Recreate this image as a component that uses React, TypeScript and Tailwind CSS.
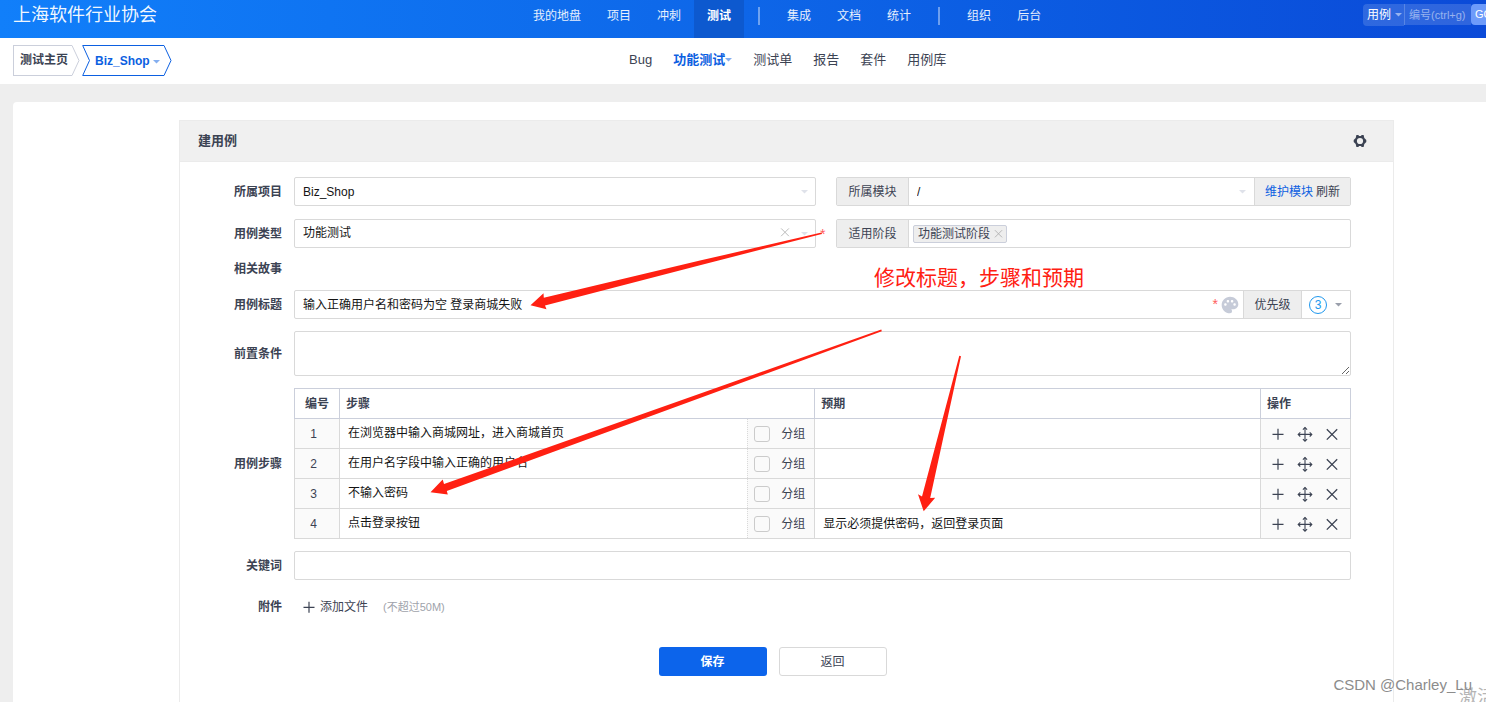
import React from "react";
import { MdPalette } from "react-icons/md";

const topGroups: string[][] = [
  ["我的地盘", "项目", "冲刺", "测试"],
  ["集成", "文档", "统计"],
  ["组织", "后台"],
];

const subItems = ["Bug", "功能测试", "测试单", "报告", "套件", "用例库"];

const steps = [
  { step: "在浏览器中输入商城网址，进入商城首页", expect: "" },
  { step: "在用户名字段中输入正确的用户名", expect: "" },
  { step: "不输入密码", expect: "" },
  { step: "点击登录按钮", expect: "显示必须提供密码，返回登录页面" },
];

function Caret({ className = "" }: { className?: string }) {
  return (
    <svg className={`pointer-events-none shrink-0 ${className}`} width="7" height="4" viewBox="0 0 7 4" fill="currentColor" aria-hidden="true">
      <path d="M0 0H7L3.5 3.6Z" />
    </svg>
  );
}

function PlusIcon() {
  return (
    <svg width="16" height="16" viewBox="0 0 16 16" fill="none" stroke="currentColor" strokeWidth="1.2" aria-hidden="true">
      <path d="M8 2.8V13.8M2.5 8.4H13.5" />
    </svg>
  );
}

function MoveIcon() {
  return (
    <svg width="16" height="16" viewBox="0 0 16 16" fill="none" stroke="currentColor" strokeWidth="1.1" aria-hidden="true">
      <path d="M8 1.5V15.1M1.5 8.4H14.5" />
      <path d="M5.9 3.6L8 1.5L10.1 3.6M5.9 13.1L8 15.2L10.1 13.1M3.3 6.3L1.2 8.4L3.3 10.5M12.7 6.3L14.8 8.4L12.7 10.5" />
    </svg>
  );
}

function CrossIcon({ size = 16 }: { size?: number }) {
  return (
    <svg width={size} height={size} viewBox="0 0 16 16" fill="none" stroke="currentColor" strokeWidth="1.3" aria-hidden="true">
      <path d="M2.8 3.2L13.2 13.6M13.2 3.2L2.8 13.6" />
    </svg>
  );
}

function GearIcon() {
  return (
    <svg width="14" height="14" viewBox="0 0 14 14" fill="currentColor" aria-hidden="true">
      <path
        fillRule="evenodd"
        d="M3.4 1L5.3 1.1L6.1 2H7.9L8.7 1.1L10.6 1L11.3 3.9L13.3 6V8L11.3 10.1L10.6 13L8.7 12.9L7.9 12H6.1L5.3 12.9L3.4 13L2.7 10.1L0.7 8V6L2.7 3.9ZM7 3.9A3.1 3.1 0 1 0 7 10.1A3.1 3.1 0 1 0 7 3.9Z"
      />
    </svg>
  );
}

function TopBar() {
  return (
    <header className="flex h-[38px] items-start bg-gradient-to-r from-[#117ffa] via-[#0e66e8] to-[#0b4ad8] text-white">
      <h1 className="w-[520px] shrink-0 pl-[13px] text-[18px] leading-[30px] text-white/95">上海软件行业协会</h1>
      <nav className="flex shrink-0">
        {topGroups.map((group, g) => (
          <React.Fragment key={g}>
            {g > 0 && (
              <span className="flex h-8 w-[30px] items-center justify-center">
                <span className="h-[18px] w-[2px] bg-white/40" />
              </span>
            )}
            {group.map((item) => (
              <a
                key={item}
                href="#"
                className={
                  item === "测试"
                    ? "h-[38px] bg-[#0d59cf] px-[13px] leading-8 font-bold"
                    : "h-[38px] px-[13px] leading-8 text-white/90"
                }
              >
                {item}
              </a>
            ))}
          </React.Fragment>
        ))}
      </nav>
      <form className="ml-auto flex overflow-hidden pt-1" onSubmit={(e) => e.preventDefault()}>
        <button type="button" className="flex h-[22px] w-[41px] items-center gap-1 rounded-l-sm bg-white/15 pl-1">
          用例
          <Caret className="text-white/50" />
        </button>
        <input
          aria-label="编号"
          placeholder="编号(ctrl+g)"
          className="h-[21px] w-[67px] border-l border-white/20 bg-white/15 pl-1 text-[11px] outline-none placeholder:text-white/50"
        />
        <span className="w-[15px] overflow-hidden">
          <button type="submit" className="h-[21px] w-8 rounded-l-sm bg-[#6e9bfa] pl-1 text-left text-[11px] font-medium">
            GO
          </button>
        </span>
      </form>
    </header>
  );
}

function SubBar() {
  return (
    <div className="flex h-[46px] items-start bg-white">
      <div className="flex w-[629px] shrink-0 pt-[7px] pl-[13px] font-bold">
        <a href="#" className="flex">
          <span className="h-[31px] border-y border-l border-[#cbcfdb] pr-1 pl-[6px] leading-7">测试主页</span>
          <svg width="8" height="31" viewBox="0 0 8 31" fill="none" stroke="#cbcfdb" aria-hidden="true">
            <path d="M0 0.5L7 15.5L0 30.5" />
          </svg>
        </a>
        <a href="#" className="ml-[2px] flex text-[#0c60e1]">
          <svg width="8" height="31" viewBox="0 0 8 31" fill="none" stroke="#0c60e1" aria-hidden="true">
            <path d="M8 0.5H0.7L7.5 15.5L0.7 30.5H8" />
          </svg>
          <span className="flex h-[31px] items-center gap-[3px] border-y border-[#0c60e1] pr-1 pl-[5px] leading-7">
            Biz_Shop
            <Caret className="mt-[3px] text-[#0c60e1]/50" />
          </span>
          <svg width="8" height="31" viewBox="0 0 8 31" fill="none" stroke="#0c60e1" aria-hidden="true">
            <path d="M0 0.5L7 15.5L0 30.5" />
          </svg>
        </a>
      </div>
      <nav className="flex gap-[21px] text-[13px] leading-[43px]">
        {subItems.map((item) =>
          item === "功能测试" ? (
            <a key={item} href="#" className="flex items-center font-bold text-[#0c60e1]">
              {item}
              <Caret className="text-[#0c60e1]/50" />
            </a>
          ) : (
            <a key={item} href="#">
              {item}
            </a>
          ),
        )}
      </nav>
    </div>
  );
}

function Row({ label, htmlFor, children, className = "" }: { label: string; htmlFor?: string; children?: React.ReactNode; className?: string }) {
  return (
    <div className={`flex items-center ${className}`}>
      <label htmlFor={htmlFor} className="mr-3 w-[102px] shrink-0 text-right leading-5 font-bold">
        {label}
      </label>
      <div className="min-w-0 flex-1">{children}</div>
    </div>
  );
}

function StepsTable() {
  return (
    <table className="w-full table-fixed border-collapse border border-[#cbcfdb]">
      <colgroup>
        <col className="w-[45px]" />
        <col className="w-[45%]" />
        <col />
        <col className="w-[90px]" />
      </colgroup>
      <thead>
        <tr className="h-[30px] text-left">
          <th className="border border-[#cbcfdb] text-center">编号</th>
          <th className="border border-[#cbcfdb] pl-[6px]">步骤</th>
          <th className="border border-[#cbcfdb] pl-[6px]">预期</th>
          <th className="border border-[#cbcfdb] pl-[6px]">操作</th>
        </tr>
      </thead>
      <tbody>
        {steps.map((row, i) => (
          <tr key={i} className="h-[30px]">
            <td className="border border-[#d9d9d9] bg-[#fafafa] p-0 pr-[7px] text-center">{i + 1}</td>
            <td className="border border-[#d9d9d9] p-0">
              <div className="flex h-[29px]">
                <input aria-label={`步骤 ${i + 1}`} defaultValue={row.step} className="min-w-0 flex-1 pb-[2px] pl-2 text-[#141414] outline-none" />
                <label className="flex w-[67px] items-center border-l border-dotted border-[#d9d9d9] bg-[#fafafa] pl-[6px]">
                  <input type="checkbox" className="mr-[11px] size-4 appearance-none rounded-[3px] border border-[#cbcbcb] checked:bg-[#0c64eb]" />
                  分组
                </label>
              </div>
            </td>
            <td className="border border-[#d9d9d9] p-0">
              <input aria-label={`预期 ${i + 1}`} defaultValue={row.expect} className="block h-[29px] w-full pb-[2px] pl-2 text-[#141414] outline-none" />
            </td>
            <td className="border border-[#d9d9d9] bg-[#fafafa] p-0">
              <div className="flex gap-[11px] pl-[9px]">
                <button type="button" aria-label="添加"><PlusIcon /></button>
                <button type="button" aria-label="移动"><MoveIcon /></button>
                <button type="button" aria-label="删除"><CrossIcon /></button>
              </div>
            </td>
          </tr>
        ))}
      </tbody>
    </table>
  );
}

function CaseForm() {
  return (
    <form className="pt-[15px] pr-[42px]" onSubmit={(e) => e.preventDefault()}>
      <Row label="所属项目" htmlFor="project">
        <div className="grid grid-cols-[522fr_515fr] gap-5">
          <div className="relative">
            <select id="project" className="h-[29px] w-full appearance-none rounded-[2px] border border-[#d9d9d9] bg-white pl-2 text-[#141414]">
              <option>Biz_Shop</option>
            </select>
            <Caret className="absolute top-[13px] right-2 text-[#dfe2ea]" />
          </div>
          <div className="flex h-[29px] rounded-[2px] border border-[#d9d9d9]">
            <label htmlFor="module" className="flex w-[72px] items-center justify-center border-r border-[#d9d9d9] bg-[#eeeeee]">
              所属模块
            </label>
            <div className="relative flex-1">
              <select id="module" className="h-full w-full appearance-none bg-white pl-2 text-[#141414]">
                <option>/</option>
              </select>
              <Caret className="absolute top-3 right-2 text-[#dfe2ea]" />
            </div>
            <div className="flex w-[96px] items-center justify-center gap-[3px] border-l border-[#d9d9d9] bg-[#eeeeee]">
              <a href="#" className="text-[#0c60e1]">维护模块</a>
              <a href="#">刷新</a>
            </div>
          </div>
        </div>
      </Row>

      <Row label="用例类型" htmlFor="type" className="mt-[13px]">
        <div className="grid grid-cols-[522fr_515fr] gap-5">
          <div className="relative">
            <select id="type" className="h-[29px] w-full appearance-none rounded-[2px] border border-[#d9d9d9] bg-white pb-[2px] pl-2 text-[#141414]">
              <option>功能测试</option>
            </select>
            <button type="button" aria-label="清除" className="absolute top-[7px] right-[25px] text-[#b9b9b9]">
              <CrossIcon size={12} />
            </button>
            <Caret className="absolute top-[13px] right-2 text-[#dfe2ea]" />
            <span className="absolute top-[5px] left-full ml-1 text-[14px] leading-5 text-[#ff5d5d]">*</span>
          </div>
          <div className="flex h-[29px] rounded-[2px] border border-[#d9d9d9]">
            <span className="flex w-[72px] items-center justify-center border-r border-[#d9d9d9] bg-[#eeeeee]">适用阶段</span>
            <div className="flex items-center pl-1">
              <span className="flex h-[18px] items-center rounded-[2px] border border-[#cbcfdb] bg-[#eeeeee] pr-[2px] pl-1">
                功能测试阶段
                <button type="button" aria-label="移除" className="ml-[3px] text-[#b0b0b0]">
                  <CrossIcon size={11} />
                </button>
              </span>
            </div>
          </div>
        </div>
      </Row>

      <Row label="相关故事" className="mt-[11px]" />

      <Row label="用例标题" htmlFor="title" className="mt-[11px]">
        <div className="flex h-[29px] rounded-l-[2px] border border-[#d9d9d9]">
          <input
            id="title"
            defaultValue="输入正确用户名和密码为空 登录商城失败"
            className="min-w-0 flex-1 pl-2 text-[#141414] outline-none"
          />
          <span className="pt-[1px] text-[14px] leading-6 text-[#ff5d5d]">*</span>
          <button type="button" aria-label="颜色" className="mr-[3px] ml-[2px] text-[#c6cbd8]">
            <MdPalette size={20} />
          </button>
          <label htmlFor="priority" className="flex w-[59px] items-center justify-center border-x border-[#d9d9d9] bg-[#eeeeee]">
            优先级
          </label>
          <button id="priority" type="button" className="flex w-[48px] items-center gap-2 pl-[7px]">
            <span className="flex size-[18px] items-center justify-center rounded-full border border-[#2098ee] text-[#2098ee]">3</span>
            <Caret className="text-[#9a9fab]" />
          </button>
        </div>
      </Row>

      <Row label="前置条件" htmlFor="precondition" className="mt-[12px]">
        <textarea id="precondition" className="block h-[45px] w-full rounded-[2px] border border-[#d9d9d9] outline-none" />
      </Row>

      <Row label="用例步骤" className="mt-[12px]">
        <StepsTable />
      </Row>

      <Row label="关键词" htmlFor="keywords" className="mt-[12px]">
        <input id="keywords" className="block h-[29px] w-full rounded-[2px] border border-[#d9d9d9] pl-2 outline-none" />
      </Row>

      <Row label="附件" className="mt-[17px]">
        <div className="flex items-center pl-[7px]">
          <button type="button" className="flex items-center gap-[3px]">
            <PlusIcon />
            添加文件
          </button>
          <span className="ml-[15px] text-[11px] text-[#a0a3ab]">(不超过50M)</span>
        </div>
      </Row>

      <div className="mt-[30px] flex justify-center gap-3 pl-[14px]">
        <button type="submit" className="h-[29px] w-[108px] rounded-[3px] bg-[#0c64eb] font-bold text-white">保存</button>
        <button type="button" className="h-[29px] w-[108px] rounded-[3px] border border-[#d9d9d9] bg-white">返回</button>
      </div>
    </form>
  );
}

function Annotations() {
  return (
    <>
      <svg className="pointer-events-none absolute top-0 left-0" width="1100" height="600" viewBox="0 0 1100 600" fill="#ff2012" aria-hidden="true">
        <path d="M530.5 305.3L543.5 293.3L543.8 297.8L700 260.6L821.5 232.5L821.8 234L700 265.2L545 305.6L546.5 309.3Z" />
        <path d="M430.5 492.3L442.7 479.5L444 484L881.3 329.6L881.8 331.2L446.8 491L447.8 494.5Z" />
        <path d="M923.7 511.3L918 494.3L922 496.4L959.3 355.8L961 356.2L930.2 498L935.2 497.8Z" />
      </svg>
      <p className="pointer-events-none absolute top-[262px] left-[874px] text-[21px] leading-8 text-[#ff2012]">修改标题，步骤和预期</p>
      <p className="pointer-events-none absolute right-0 bottom-[-9px] w-[27px] overflow-hidden text-[18px] leading-7 whitespace-nowrap text-[#b5b5b5]">激活</p>
      <p className="pointer-events-none absolute right-[14px] bottom-[7px] text-[15px] leading-5 text-[#8c8c8c]">CSDN @Charley_Lu</p>
    </>
  );
}

export default function App() {
  return (
    <div className="relative flex min-h-screen flex-col overflow-hidden bg-[#eeeeee] font-['Liberation_Sans','Noto_Sans_CJK_SC',sans-serif] text-[12px] text-[#3c4353]">
      <TopBar />
      <SubBar />
      <main className="mt-[18px] ml-[13px] flex flex-1 flex-col rounded-tl-[4px] bg-white pt-[18px] pr-[92px] pl-[166px]">
        <section className="flex-1 border-x border-t border-[#ebebeb] pb-[26px]">
          <div className="flex h-[41px] items-center justify-between border-b border-[#ebebeb] bg-[#f0f0f0] pr-[26px] pl-[18px]">
            <h2 className="text-[13px] font-bold">建用例</h2>
            <button type="button" aria-label="设置">
              <GearIcon />
            </button>
          </div>
          <CaseForm />
        </section>
      </main>
      <Annotations />
    </div>
  );
}
